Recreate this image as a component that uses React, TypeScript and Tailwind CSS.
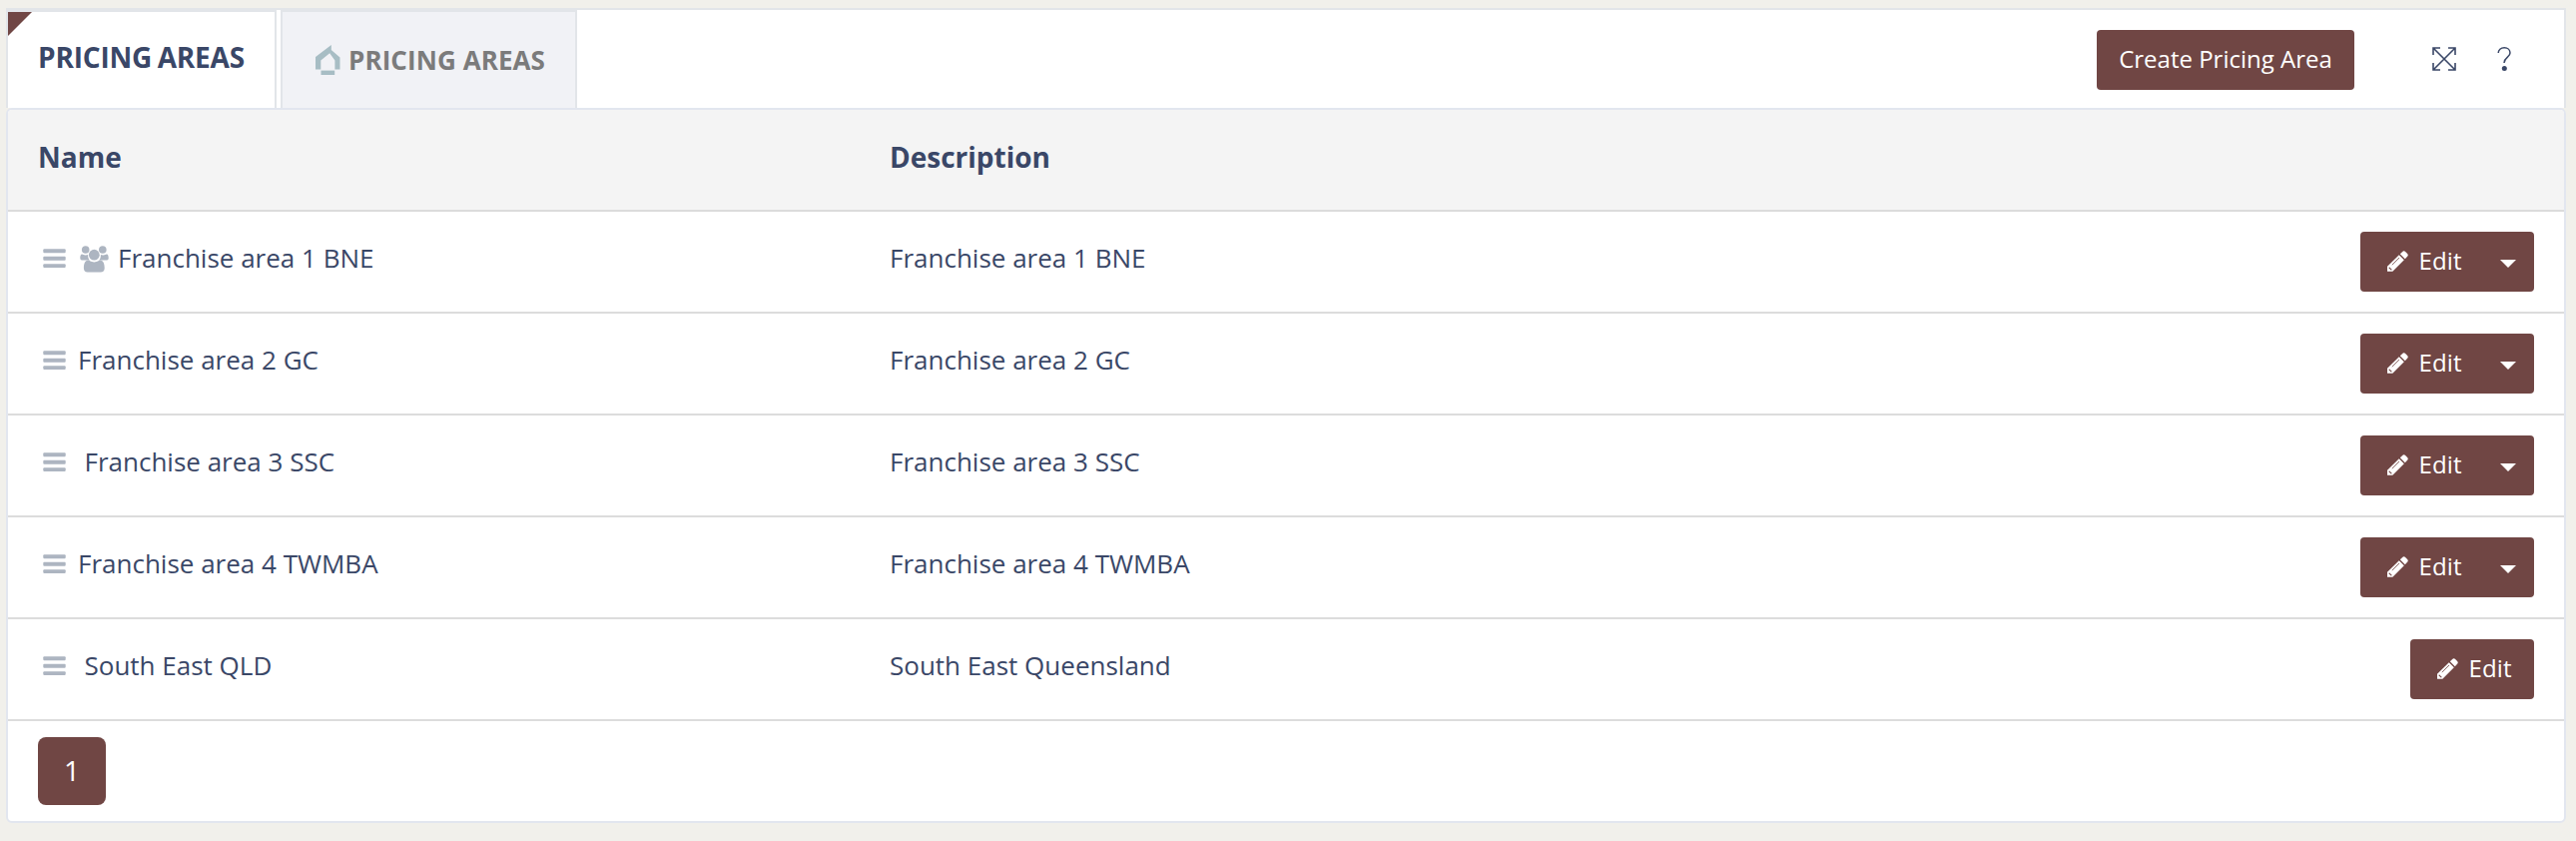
import React from "react";

type Row = { name: string; description: string; group?: boolean; wide?: boolean; menu: boolean };

const rows: Row[] = [
  { name: "Franchise area 1 BNE", description: "Franchise area 1 BNE", group: true, menu: true },
  { name: "Franchise area 2 GC", description: "Franchise area 2 GC", menu: true },
  { name: "Franchise area 3 SSC", description: "Franchise area 3 SSC", wide: true, menu: true },
  { name: "Franchise area 4 TWMBA", description: "Franchise area 4 TWMBA", menu: true },
  { name: "South East QLD", description: "South East Queensland", wide: true, menu: false },
];

function Handle() {
  return (
    <svg className="h-[20px] w-[23px] shrink-0 fill-[#adb5c1]" viewBox="0 0 23 20">
      <rect x="0.3" y="0.3" width="22.4" height="3.9" rx="1" />
      <rect x="0.3" y="7.8" width="22.4" height="3.9" rx="1" />
      <rect x="0.3" y="15.2" width="22.4" height="3.9" rx="1" />
    </svg>
  );
}

function Group() {
  return (
    <svg className="h-[27px] w-[29px] shrink-0 fill-[#adb5c1]" viewBox="0 0 29 27">
      <circle cx="5.7" cy="4" r="3.8" />
      <circle cx="22.8" cy="4" r="3.8" />
      <path d="M2.2 8.6C3 8.6 4 9.4 5.7 9.4c1 0 1.7-.2 2.4-.5-.1 2.3.5 4.200 1.700 5.700H3C1.200 14.600.300 13.800.300 12.400c0-1 .1-3.800 1.900-3.800z" />
      <path d="M26.800 8.600c-.8 0-1.800.8-3.500.8-1 0-1.700-.2-2.400-.5.1 2.300-.5 4.200-1.700 5.700H26c1.800 0 2.700-.8 2.700-2.200 0-1-.1-3.800-1.900-3.800z" />
      <circle cx="14.300" cy="9.200" r="5.400" />
      <path d="M8.400 14.600c1.300 0 2.500 1.900 5.900 1.900s4.600-1.900 5.900-1.900c3.500 0 4.500 4 4.500 7.800 0 2.400-1.500 4-3.900 4H7.800c-2.400 0-3.900-1.600-3.900-4 0-3.800 1-7.800 4.500-7.800z" />
    </svg>
  );
}

function Pencil() {
  return (
    <svg className="h-[21px] w-[21px] fill-white" viewBox="0 0 21 21">
      <path d="M11.800 4.200 16.800 9.200 5.300 20.700H0V15.700z" />
      <path d="M12.800 3.200 15.200.9c.9-.9 2-.9 2.900 0l2 2c.9.900.9 1.900 0 2.800L17.800 8.200z" />
      <path d="M2 16.200 4.800 19 3.800 19.600 1.400 17.200z" className="fill-[#704644]" />
      <path d="M4.800 14.200 12 7" className="fill-none stroke-[#704644] stroke-[0.8]" />
    </svg>
  );
}

function Tabs() {
  return (
    <div className="flex h-full">
      <div className="relative h-full w-[269px] border-t-2 border-r-2 border-[#e2e5e9] pt-[26px] pl-[30px] text-[28px] leading-[38px] font-bold tracking-[-0.2px] whitespace-nowrap text-[#3a4767] [word-spacing:-1.5px]">
        <svg className="absolute top-0 left-0 h-6 w-6 fill-[#704644]" viewBox="0 0 24 24">
          <path d="M0 0h24L0 24z" />
        </svg>
        PRICING AREAS
      </div>
      <div className="ml-1 flex h-full w-[297px] border-2 border-b-0 border-[#e2e5e9] bg-[#f1f2f6] pl-[33px] text-[26px] leading-[36px] font-bold whitespace-nowrap text-[#7b7b7b]">
        <svg className="mt-[33px] mr-[8px] h-[31px] w-[25px] shrink-0 fill-[#a7bdc4]" viewBox="0 0 25 31">
          <path d="M0 24.600V12L15.800 0V5L24.500 12.500V24.600H19.400V15.500L14.200 8.300L5.300 15.500V24.600z" />
          <path d="M5.500 25.600h13.700v4.400H5.500z" />
        </svg>
        <span className="mt-[30px] tracking-[0.08px]">PRICING AREAS</span>
      </div>
    </div>
  );
}

export default function App() {
  return (
    <div className="h-[842px] w-[2580px] bg-[#f1f0eb] pt-2 pl-[6px] font-['Open_Sans',sans-serif] text-[26px] text-[#3a4767]">
      <div className="flex h-[100px] w-[2564px] justify-between border-2 border-b-0 border-[#e2e5e9] bg-white">
        <Tabs />
        <div className="flex items-start">
          <button className="mt-5 h-[60px] w-[258px] rounded-[4px] bg-[#704644] pb-[2px] text-[24px] whitespace-nowrap text-white">
            Create Pricing Area
          </button>
          <svg className="mt-[37px] ml-[78px] h-6 w-6 fill-none stroke-[#3a4767] stroke-[1.6]" viewBox="0 0 24 24">
            <path d="M1 1 23 23M23 1 1 23M1 8V1H8M16 1h7V8M23 16v7H16M8 23H1V16" />
          </svg>
          <svg className="mt-[37px] mr-[53px] ml-[41px] h-6 w-[14px] fill-none stroke-[#3a4767] stroke-[1.5]" viewBox="0 0 14 24">
            <path d="M1.200 6C1.200 2.800 3.700.8 7.200.8S13 3 13 6c0 4.500-6 4.500-6 10" />
            <circle cx="7.300" cy="21.500" r="2.500" className="fill-[#3a4767] stroke-none" />
          </svg>
        </div>
      </div>
      <div className="h-[716px] w-[2564px] overflow-hidden rounded-[6px] border-2 border-[#e2e6ef] bg-white">
        <div className="grid h-[102px] grid-cols-[853px_1fr] border-b-2 border-[#dcdcdc] bg-[#f4f4f4] pt-[28px] pl-[30px] text-[28px] leading-[38px] font-bold">
          <span>Name</span>
          <span>Description</span>
        </div>
        {rows.map((r) => (
          <div key={r.name} className="grid h-[102px] grid-cols-[853px_1fr_auto] items-start border-b-2 border-[#dcdcdc] pr-[30px] pl-[30px]">
            <div className="mt-[29px] flex h-[36px] items-center pl-[5px]">
              <Handle />
              {r.group && (
                <span className="ml-[14px]">
                  <Group />
                </span>
              )}
              <span className={r.wide ? "mb-[2px] ml-[18.5px] leading-[36px]" : r.group ? "mb-[2px] ml-[9px] leading-[36px]" : "mb-[2px] ml-[12px] leading-[36px]"}>
                {r.name}
              </span>
            </div>
            <span className="mt-[28px] leading-[36px]">{r.description}</span>
            <div className="mt-5 flex h-[60px] items-start rounded-[4px] bg-[#704644] text-[24px] leading-[34px] text-white">
              <span className="mt-[19px] ml-[27px]">
                <Pencil />
              </span>
              <span className="mt-[12px] ml-[10.5px] w-[65.5px] tracking-[0.1px]">Edit</span>
              {r.menu && (
                <svg className="mt-[28px] mr-[18px] ml-[16px] h-2 w-4 fill-white" viewBox="0 0 16 8">
                  <path d="M0 0h16L8 8z" />
                </svg>
              )}
            </div>
          </div>
        ))}
        <div className="pt-4 pl-[30px]">
          <div className="flex h-[68px] w-[68px] items-center justify-center rounded-[8px] bg-[#704644] pb-[2px] text-[28px] text-white">1</div>
        </div>
      </div>
    </div>
  );
}
